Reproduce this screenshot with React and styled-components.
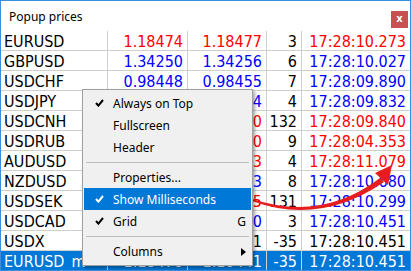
import React from 'react';
import styled, { createGlobalStyle } from 'styled-components';

const GlobalStyle = createGlobalStyle`
	html, body {
		margin: 0;
		padding: 0;
		background: #ffffff;
		overflow: hidden;
	}
`;

const RED = '#ff0000';
const BLUE = '#0000ff';
const BLACK = '#000000';

const rows = [
	{ sym: 'EURUSD', bid: '1.18474', ask: '1.18477', spread: '3', time: '17:28:10.273', pc: RED, tc: RED },
	{ sym: 'GBPUSD', bid: '1.34250', ask: '1.34256', spread: '6', time: '17:28:10.027', pc: BLUE, tc: BLUE },
	{ sym: 'USDCHF', bid: '0.98448', ask: '0.98455', spread: '7', time: '17:28:09.890', pc: BLUE, tc: BLUE },
	{ sym: 'USDJPY', bid: '110.370', ask: '110.374', spread: '4', time: '17:28:09.832', pc: BLUE, tc: BLUE },
	{ sym: 'USDCNH', bid: '6.46568', ask: '6.46700', spread: '132', time: '17:28:09.840', pc: RED, tc: RED },
	{ sym: 'USDRUB', bid: '73.2491', ask: '73.2500', spread: '9', time: '17:28:04.353', pc: RED, tc: RED },
	{ sym: 'AUDUSD', bid: '0.77649', ask: '0.77653', spread: '4', time: '17:28:11.079', pc: RED, tc: RED },
	{ sym: 'NZDUSD', bid: '0.72095', ask: '0.72103', spread: '8', time: '17:28:10.680', pc: BLUE, tc: BLUE },
	{ sym: 'USDSEK', bid: '8.51744', ask: '8.51875', spread: '131', time: '17:28:10.299', pc: RED, tc: BLUE },
	{ sym: 'USDCAD', bid: '1.24867', ask: '1.24870', spread: '3', time: '17:28:10.451', pc: BLUE, tc: BLUE },
	{ sym: 'USDX', bid: '92.326', ask: '92.291', spread: '-35', time: '17:28:10.451', pc: BLACK, tc: BLACK },
	{ sym: 'EURUSD_m', bid: '1.18476', ask: '1.18441', spread: '-35', time: '17:28:10.451', pc: BLACK, tc: BLACK, selected: true }
];

const menuItems = [
	{ label: 'Always on Top', checked: true },
	{ label: 'Fullscreen' },
	{ label: 'Header' },
	{ sep: true },
	{ label: 'Properties...' },
	{ label: 'Show Milliseconds', checked: true, active: true },
	{ label: 'Grid', checked: true, shortcut: 'G' },
	{ sep: true },
	{ label: 'Columns', submenu: true }
];

const Screen = styled.div`
	position: relative;
	width: 411px;
	height: 271px;
`;

const Window = styled.div`
	box-sizing: border-box;
	width: 411px;
	height: 271px;
	border: 1px solid #3a8ee0;
	display: flex;
	flex-direction: column;
	background: #ffffff;
`;

const TitleBar = styled.div`
	height: 30px;
	flex: 0 0 auto;
	display: flex;
	align-items: center;
	justify-content: space-between;
	padding: 0 2px 0 8px;
	font-family: 'Noto Sans', 'Open Sans', sans-serif;
	font-size: 12px;
	color: #000;
`;

const CloseButton = styled.div`
	width: 17px;
	height: 17px;
	margin-top: 6px;
	background: #c75050;
	color: #fff;
	font-family: 'DejaVu Sans', sans-serif;
	font-size: 10px;
	font-weight: bold;
	display: flex;
	align-items: center;
	justify-content: center;
	line-height: 1;
`;

const Grid = styled.div`
	flex: 1 1 auto;
	display: grid;
	grid-template-columns: 106px 79px 78px 34px 108px;
	grid-auto-rows: 19px;
	gap: 1px;
	background: #cfcfcf;
	font-family: 'DejaVu Sans Condensed', 'Liberation Sans', sans-serif;
	font-stretch: condensed;
	font-size: 16px;
`;

const Cell = styled.div`
	background: ${(p) => (p.selected ? '#0078d7' : '#ffffff')};
	color: ${(p) => (p.selected ? '#ffffff' : p.color || '#000')};
	text-align: ${(p) => (p.left ? 'left' : 'right')};
	padding: ${(p) => (p.left ? '0 0 0 3px' : '0 4px 0 0')};
	line-height: 21px;
	white-space: nowrap;
	overflow: hidden;
`;

const Menu = styled.div`
	position: absolute;
	left: 82px;
	top: 89px;
	width: 171px;
	box-sizing: border-box;
	background: #f0f0f0;
	border: 1px solid #a0a0a0;
	box-shadow: 2px 2px 3px rgba(0, 0, 0, 0.35);
	padding: 2px 1px 3px 1px;
	font-family: 'Noto Sans', 'Open Sans', sans-serif;
	font-size: 12px;
	color: #000;
`;

const Item = styled.div`
	height: 22px;
	display: grid;
	grid-template-columns: 29px 1fr 16px;
	align-items: center;
	background: ${(p) => (p.active ? '#0078d7' : 'transparent')};
	color: ${(p) => (p.active ? '#ffffff' : '#000')};
`;

const CheckCell = styled.div`
	display: flex;
	padding-left: 11px;
	align-items: center;
`;

const Shortcut = styled.div`
	text-align: right;
	padding-right: 5px;
`;

const Separator = styled.div`
	height: 8px;
	display: flex;
	align-items: center;
	padding: 0 2px;

	&::after {
		content: '';
		flex: 1;
		height: 1px;
		background: #bdbdbd;
	}
`;

const Arrow = styled.svg`
	position: absolute;
	left: 0;
	top: 0;
	pointer-events: none;
`;

const Check = ({ color }) => (
	<svg width="9" height="8" viewBox="0 0 9 8">
		<path d="M1 4 L3.4 6.6 L8 1" fill="none" stroke={color} strokeWidth="2" />
	</svg>
);

export default function App() {
	return (
		<Screen>
			<GlobalStyle />
			<Window>
				<TitleBar>
					<span>Popup prices</span>
					<CloseButton>x</CloseButton>
				</TitleBar>
				<Grid>
					{rows.map((r) => (
						<React.Fragment key={r.sym}>
							<Cell left selected={r.selected}>{r.sym}</Cell>
							<Cell selected={r.selected} color={r.pc}>{r.bid}</Cell>
							<Cell selected={r.selected} color={r.pc}>{r.ask}</Cell>
							<Cell selected={r.selected}>{r.spread}</Cell>
							<Cell selected={r.selected} color={r.tc}>{r.time}</Cell>
						</React.Fragment>
					))}
				</Grid>
			</Window>
			<Arrow width="411" height="271" viewBox="0 0 411 271">
				<path
					d="M252 199 Q322 222 380 178 L384 182 Q320 226 252 201 Z"
					fill="#e81c1c"
				/>
				<polygon points="392,165 375,173 388,185" fill="#e81c1c" />
			</Arrow>
			<Menu>
				{menuItems.map((m, i) =>
					m.sep ? (
						<Separator key={i} />
					) : (
						<Item key={i} active={m.active}>
							<CheckCell>{m.checked && <Check color={m.active ? '#fff' : '#000'} />}</CheckCell>
							<span>{m.label}</span>
							<Shortcut>
								{m.shortcut}
								{m.submenu && (
									<svg width="5" height="8" viewBox="0 0 5 8">
										<polygon points="0,0 5,4 0,8" fill="#000" />
									</svg>
								)}
							</Shortcut>
						</Item>
					)
				)}
			</Menu>
		</Screen>
	);
}
